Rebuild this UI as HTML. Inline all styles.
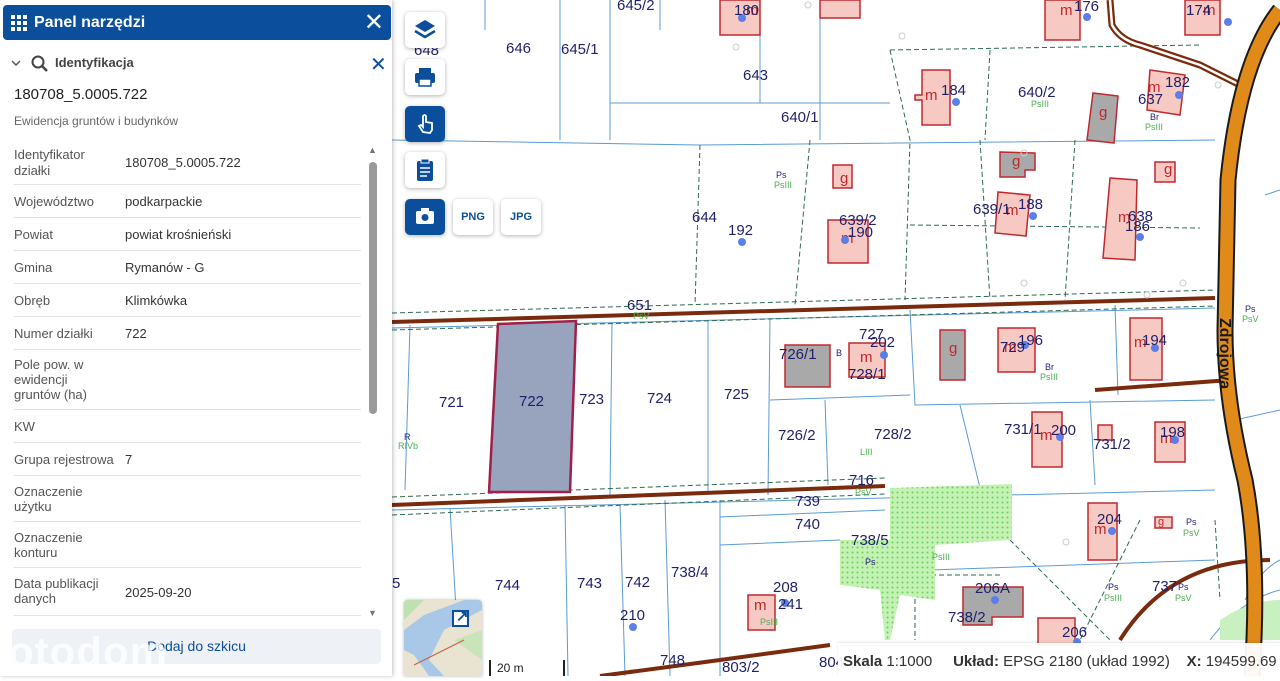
<!DOCTYPE html>
<html><head><meta charset="utf-8"><style>
*{margin:0;padding:0;box-sizing:border-box}
body{width:1280px;height:676px;overflow:hidden;background:#fff;font-family:"Liberation Sans",sans-serif;position:relative}
#map{position:absolute;left:0;top:0}
.panel{position:absolute;left:0;top:0;width:392px;height:676px;background:#fff;box-shadow:1px 0 4px rgba(0,0,0,.25)}
.hdr{position:absolute;left:3px;top:5px;width:388px;height:35px;background:#0b4f9c;border-radius:4px;color:#fff;font-weight:bold;font-size:16px;line-height:35px;padding-left:31px}
.row{position:absolute;left:14px;width:347px;border-bottom:1px solid #e3e3e3;font-size:13px;color:#555}
.row .v{position:absolute;left:111px;color:#333}
.btn{position:absolute;width:40px;height:36px;background:#fff;border-radius:5px;box-shadow:0 1px 4px rgba(0,0,0,.3)}
.btn.b{background:#0b4f9c}
.tb{position:absolute;font-size:11px;font-weight:bold;color:#0b4f9c;text-align:center;line-height:36px}
svg text{font-family:"Liberation Sans",sans-serif}
</style></head><body>
<svg id="map" width="1280" height="676" viewBox="0 0 1280 676">
<defs><pattern id="dots" width="5" height="5" patternUnits="userSpaceOnUse"><rect width="5" height="5" fill="#c4f2b4"/><circle cx="2.5" cy="2.5" r="1" fill="#6fcf5a"/></pattern></defs>
<g stroke="#5b9bd5" stroke-width="1" fill="none">
<path d="M392 140 L700 145 L1215 140"/><path d="M610 0 L610 140"/><path d="M660 0 L660 30"/><path d="M560 0 L560 140"/><path d="M485 0 L485 30"/>
<path d="M610 103 L890 103"/><path d="M760 0 L760 103"/><path d="M820 0 L820 140"/>
<path d="M392 328 L1215 308"/><path d="M392 510 L1215 490"/>
<path d="M410 325 L405 490"/><path d="M612 323 L610 495"/><path d="M708 320 L708 495"/><path d="M770 318 L768 495"/>
<path d="M770 400 L910 395"/><path d="M825 400 L828 485"/><path d="M910 310 L915 405 L1215 400"/><path d="M960 405 L980 488"/>
<path d="M1090 400 L1095 485"/><path d="M1115 305 L1118 395"/><path d="M1235 420 L1280 410"/><path d="M1265 195 L1280 190"/>
<path d="M450 508 L460 676"/><path d="M565 505 L568 676"/><path d="M620 505 L625 676"/><path d="M665 500 L670 676"/>
<path d="M720 500 L720 676"/><path d="M720 517 L885 510"/><path d="M720 545 L840 540"/>
<path d="M1010 485 L1010 540"/><path d="M930 570 L1215 560"/>
<path d="M1245 600 Q1260 570 1280 560"/><path d="M1210 640 Q1240 600 1280 590"/>
</g>
<g stroke="#2e6b4f" stroke-width="1" fill="none" stroke-dasharray="5,3">
<path d="M700 145 L695 305"/><path d="M810 140 L795 305"/><path d="M890 50 L910 140 L905 300"/><path d="M990 50 L985 140"/>
<path d="M1075 140 L1065 300"/><path d="M890 50 L1200 45"/>
<path d="M980 140 L990 300"/><path d="M910 225 L1200 228"/>
<path d="M392 313 L1215 290"/><path d="M392 330 L1215 306"/><path d="M392 497 L885 478"/><path d="M392 515 L885 494"/>
<path d="M1140 520 L1080 640"/><path d="M1215 520 L1220 600"/>
<path d="M915 575 L915 640"/><path d="M915 575 L1000 575"/><path d="M1010 540 L1110 640"/>
</g>
<path d="M840 540 L890 540 L890 488 L1012 484 L1012 540 L935 545 L935 600 L900 595 L890 640 L885 640 L880 590 L840 585 Z" fill="url(#dots)"/>
<path d="M1220 620 Q1250 600 1280 600 L1280 640 L1220 640 Z" fill="#c8f0c0"/>
<g stroke="#7a2b0e" stroke-width="4" fill="none">
<path d="M392 322 L1215 298"/><path d="M392 505 L885 486"/>
<path d="M1095 390 L1230 380"/>
<path d="M1120 640 Q1170 560 1270 560"/>
<path d="M600 676 L720 660 L830 645"/>
</g>
<path d="M1110 0 L1112 25 Q1120 40 1140 45 L1200 65 L1240 85" stroke="#7a2b0e" stroke-width="7" fill="none"/>
<path d="M1110 0 L1112 25 Q1120 40 1140 45 L1200 65 L1240 85" stroke="#fff" stroke-width="2.5" fill="none"/>
<path d="M1280 10 Q1240 60 1228 180 L1225 330 Q1225 400 1245 480 Q1260 560 1252 676" stroke="#1a1a1a" stroke-width="17" fill="none"/>
<path d="M1280 10 Q1240 60 1228 180 L1225 330 Q1225 400 1245 480 Q1260 560 1252 676" stroke="#e08a1a" stroke-width="13" fill="none"/>
<path d="M498 324 L576 321 L570 492 L489 492 Z" fill="#98a4bd" stroke="#a0204a" stroke-width="2.5"/>
<g fill="#f6cac2" stroke="#c0282e" stroke-width="1.5">
<path d="M720 0 L760 0 L760 35 L720 35Z"/><path d="M820 0 L860 0 L860 18 L820 18Z"/>
<path d="M1045 0 L1080 0 L1080 40 L1045 40Z"/><path d="M1185 0 L1220 0 L1220 35 L1185 35Z"/>
<path d="M922 70 L950 70 L950 125 L922 125 L922 100 L915 100 L915 95 L922 95Z"/>
<path d="M1150 70 L1185 75 L1180 115 L1147 110Z"/>
<path d="M833 165 L852 165 L852 188 L833 188Z"/><path d="M828 220 L868 220 L868 263 L828 263Z"/>
<path d="M998 192 L1030 195 L1026 236 L995 233Z"/><path d="M1110 178 L1137 180 L1135 260 L1103 258Z"/>
<path d="M1155 162 L1175 162 L1175 182 L1155 182Z"/>
<path d="M998 328 L1035 328 L1035 372 L998 372Z"/><path d="M1130 318 L1162 318 L1162 380 L1130 380Z"/>
<path d="M1032 412 L1062 412 L1062 467 L1032 467Z"/><path d="M1155 422 L1185 422 L1185 462 L1155 462Z"/>
<path d="M1098 425 L1112 425 L1112 440 L1098 440Z"/>
<path d="M1088 503 L1117 503 L1117 560 L1088 560Z"/><path d="M1155 517 L1172 517 L1172 528 L1155 528Z"/>
<path d="M748 595 L775 595 L775 630 L748 630Z"/><path d="M1038 618 L1075 618 L1075 645 L1038 645Z"/>
<path d="M849 343 L885 343 L885 377 L849 377Z"/>
</g>
<g fill="#a9a9a9" stroke="#c0282e" stroke-width="1.5">
<path d="M1093 93 L1118 96 L1114 143 L1087 140Z"/><path d="M1000 152 L1035 153 L1035 170 L1025 170 L1025 177 L1000 177Z"/>
<path d="M785 345 L830 345 L830 387 L785 387Z"/><path d="M940 330 L965 330 L965 380 L940 380Z"/>
<path d="M963 587 L1023 587 L1023 617 L992 617 L992 625 L963 625Z"/>
</g>
<g font-size="15" fill="#c0282e">
<text x="925" y="100">m</text><text x="1148" y="92">m</text><text x="1099" y="117">g</text><text x="1012" y="166">g</text><text x="1164" y="174">g</text>
<text x="1118" y="222">m</text><text x="1006" y="215">m</text><text x="840" y="183">g</text><text x="841" y="243">m</text>
<text x="746" y="15">m</text><text x="1060" y="15">m</text><text x="1203" y="15">m</text><text x="949" y="353">g</text>
<text x="1004" y="352">m</text><text x="1134" y="347">m</text><text x="1040" y="440">m</text><text x="1160" y="443">m</text>
<text x="1094" y="534">m</text><text x="754" y="610">m</text><text x="1158" y="525" font-size="11">g</text><text x="860" y="362">m</text>
</g>
<g fill="#5b7fe8">
<circle cx="742" cy="242" r="4"/><circle cx="845" cy="240" r="4"/><circle cx="1033" cy="216" r="4"/><circle cx="1140" cy="237" r="4"/>
<circle cx="884" cy="355" r="4"/><circle cx="1025" cy="345" r="4"/><circle cx="1155" cy="348" r="4"/><circle cx="1060" cy="437" r="4"/>
<circle cx="1175" cy="440" r="4"/><circle cx="1112" cy="531" r="4"/><circle cx="995" cy="600" r="4"/><circle cx="633" cy="627" r="4"/>
<circle cx="785" cy="603" r="4"/><circle cx="1077" cy="642" r="4"/><circle cx="956" cy="102" r="4"/><circle cx="1179" cy="95" r="4"/>
<circle cx="1087" cy="17" r="4"/><circle cx="742" cy="18" r="4"/><circle cx="1228" cy="22" r="4"/>
</g>
<g fill="none" stroke="#ccc"><circle cx="902" cy="36" r="3"/><circle cx="1218" cy="85" r="3"/><circle cx="1024" cy="153" r="3"/><circle cx="1024" cy="283" r="3"/><circle cx="1183" cy="283" r="3"/><circle cx="736" cy="47" r="3"/><circle cx="808" cy="5" r="3"/><circle cx="1147" cy="295" r="3"/><circle cx="1066" cy="542" r="3"/></g>
<g font-size="15" fill="#1f1f6a">
<text x="414" y="55">648</text><text x="506" y="53">646</text><text x="561" y="54">645/1</text><text x="617" y="10">645/2</text>
<text x="743" y="80">643</text><text x="781" y="122">640/1</text><text x="1018" y="97">640/2</text><text x="1138" y="104">637</text>
<text x="692" y="222">644</text><text x="728" y="235">192</text><text x="839" y="225">639/2</text><text x="848" y="237">190</text>
<text x="973" y="214">639/1</text><text x="1018" y="209">188</text><text x="1128" y="221">638</text><text x="1125" y="231">186</text>
<text x="627" y="310">651</text><text x="859" y="339">727</text><text x="870" y="347">202</text><text x="779" y="359">726/1</text>
<text x="848" y="379">728/1</text><text x="1000" y="352">729</text><text x="1018" y="345">196</text><text x="1142" y="345">194</text>
<text x="439" y="407">721</text><text x="519" y="406">722</text><text x="579" y="404">723</text><text x="647" y="403">724</text>
<text x="724" y="399">725</text><text x="778" y="440">726/2</text><text x="874" y="439">728/2</text><text x="1004" y="434">731/1</text>
<text x="1051" y="435">200</text><text x="1093" y="449">731/2</text><text x="1160" y="437">198</text><text x="849" y="485">716</text>
<text x="795" y="506">739</text><text x="795" y="529">740</text><text x="851" y="545">738/5</text><text x="495" y="590">744</text>
<text x="577" y="588">743</text><text x="625" y="587">742</text><text x="671" y="577">738/4</text><text x="620" y="620">210</text>
<text x="773" y="592">208</text><text x="778" y="609">241</text><text x="948" y="622">738/2</text><text x="975" y="593">206A</text>
<text x="1097" y="524">204</text><text x="1152" y="591">737</text><text x="660" y="665">748</text><text x="722" y="672">803/2</text>
<text x="1062" y="637">206</text><text x="734" y="15">180</text><text x="1074" y="11">176</text><text x="1186" y="15">174</text>
<text x="941" y="95">184</text><text x="1165" y="87">182</text><text x="392" y="588">5</text><text x="819" y="667">804</text>
</g>
<g font-size="9" fill="#1f1f7a"><text x="776" y="178">Ps</text><text x="865" y="565">Ps</text><text x="1108" y="590">Ps</text><text x="1186" y="525">Ps</text><text x="1178" y="590">Ps</text><text x="1245" y="312">Ps</text><text x="404" y="440">R</text><text x="1150" y="120">Br</text><text x="1045" y="370">Br</text><text x="836" y="356">B</text></g>
<g font-size="9" fill="#4caf50"><text x="774" y="188">PsIII</text><text x="932" y="560">PsIII</text><text x="1104" y="601">PsIII</text><text x="1183" y="536">PsV</text><text x="1175" y="601">PsV</text><text x="1040" y="380">PsIII</text><text x="1145" y="130">PsIII</text><text x="1242" y="322">PsV</text><text x="398" y="449">RIVb</text><text x="855" y="495">PsV</text><text x="760" y="625">PsIII</text><text x="633" y="319">PsV</text><text x="860" y="455">LIII</text><text x="1031" y="107">PsIII</text></g>
<text x="1220" y="318" font-size="16" font-weight="bold" fill="#1a1a1a" transform="rotate(90 1220 318)">Zdrojowa</text>
</svg>

<div class="panel">
<div class="hdr"><svg style="position:absolute;left:8px;top:10px" width="16" height="16"><g fill="#fff"><rect x="0" y="0" width="4" height="4"/><rect x="6" y="0" width="4" height="4"/><rect x="12" y="0" width="4" height="4"/><rect x="0" y="6" width="4" height="4"/><rect x="6" y="6" width="4" height="4"/><rect x="12" y="6" width="4" height="4"/><rect x="0" y="12" width="4" height="4"/><rect x="6" y="12" width="4" height="4"/><rect x="12" y="12" width="4" height="4"/></g></svg>Panel narzędzi<span style="position:absolute;right:7px;top:0;font-weight:normal;font-size:24px">✕</span></div>
<svg style="position:absolute;left:10px;top:55px" width="40" height="20"><path d="M2 6 L6 10 L10 6" stroke="#555" stroke-width="1.5" fill="none"/><circle cx="28" cy="7" r="5.5" stroke="#444" stroke-width="2" fill="none"/><path d="M32 11 L37 16" stroke="#444" stroke-width="2.5"/></svg>
<div style="position:absolute;left:55px;top:55px;font-size:13px;font-weight:bold;color:#444">Identyfikacja</div>
<div style="position:absolute;left:370px;top:52px;font-size:20px;color:#0b4f9c">✕</div>
<div style="position:absolute;left:14px;top:86px;font-size:15px;color:#222">180708_5.0005.722</div>
<div style="position:absolute;left:14px;top:114px;font-size:12px;color:#666">Ewidencja gruntów i budynków</div>
<div class="row" style="top:145px;height:40px;line-height:16px;padding-top:2px">Identyfikator<br>działki<span class="v" style="top:10px">180708_5.0005.722</span></div>
<div class="row" style="top:185px;height:33px;line-height:33px">Województwo<span class="v">podkarpackie</span></div>
<div class="row" style="top:218px;height:33px;line-height:33px">Powiat<span class="v">powiat krośnieński</span></div>
<div class="row" style="top:251px;height:33px;line-height:33px">Gmina<span class="v">Rymanów - G</span></div>
<div class="row" style="top:284px;height:33px;line-height:33px">Obręb<span class="v">Klimkówka</span></div>
<div class="row" style="top:317px;height:33px;line-height:33px">Numer działki<span class="v">722</span></div>
<div class="row" style="top:350px;height:60px;line-height:15px;padding-top:7px">Pole pow. w<br>ewidencji<br>gruntów (ha)</div>
<div class="row" style="top:410px;height:33px;line-height:33px">KW</div>
<div class="row" style="top:443px;height:33px;line-height:33px">Grupa rejestrowa<span class="v">7</span></div>
<div class="row" style="top:476px;height:46px;line-height:15px;padding-top:8px">Oznaczenie<br>użytku</div>
<div class="row" style="top:522px;height:46px;line-height:15px;padding-top:8px">Oznaczenie<br>konturu</div>
<div class="row" style="top:568px;height:48px;line-height:15px;padding-top:8px">Data publikacji<br>danych<span class="v" style="top:17px">2025-09-20</span></div>
<div style="position:absolute;left:368px;top:145px;font-size:9px;color:#777">▲</div>
<div style="position:absolute;left:369px;top:162px;width:8px;height:252px;background:#9a9a9a;border-radius:4px"></div>
<div style="position:absolute;left:368px;top:608px;font-size:9px;color:#777">▼</div>
<div style="position:absolute;left:12px;top:629px;width:369px;height:35px;background:#eef1f5;border-radius:4px;text-align:center;line-height:35px;font-size:14px;color:#0b4f9c">Dodaj do szkicu</div>
<div style="position:absolute;left:8px;top:628px;font-size:42px;font-weight:bold;color:rgba(255,255,255,.75);letter-spacing:1px">otodom</div>
</div>

<div class="btn" style="left:405px;top:12px"><svg width="40" height="36"><path d="M20 8 L30 14 L20 20 L10 14Z" fill="#0b4f9c"/><path d="M10 19 L20 25 L30 19" stroke="#0b4f9c" stroke-width="2.5" fill="none"/></svg></div>
<div class="btn" style="left:405px;top:59px"><svg width="40" height="36"><rect x="14" y="9" width="12" height="5" fill="#0b4f9c"/><rect x="10" y="14" width="20" height="10" rx="2" fill="#0b4f9c"/><rect x="14" y="20" width="12" height="7" fill="#fff" stroke="#0b4f9c" stroke-width="1.5"/></svg></div>
<div class="btn b" style="left:405px;top:106px"><svg width="40" height="36"><path d="M18 26 L14 20 L16 19 L18 21 L18 10 Q20 8 21 10 L21 16 L27 17 L27 24 L25 27Z" fill="none" stroke="#fff" stroke-width="1.8"/></svg></div>
<div class="btn" style="left:405px;top:152px"><svg width="40" height="36"><rect x="12" y="9" width="16" height="20" rx="2" fill="#0b4f9c"/><rect x="16" y="7" width="8" height="4" fill="#0b4f9c" stroke="#fff"/><path d="M15 16h10M15 20h10M15 24h7" stroke="#fff" stroke-width="1.5"/></svg></div>
<div class="btn b" style="left:405px;top:199px"><svg width="40" height="36"><rect x="11" y="12" width="18" height="13" rx="2" fill="#fff"/><rect x="16" y="9" width="8" height="4" fill="#fff"/><circle cx="20" cy="18.5" r="3.5" fill="#0b4f9c"/></svg></div>
<div class="btn tb" style="left:453px;top:199px">PNG</div>
<div class="btn tb" style="left:501px;top:199px">JPG</div>

<div style="position:absolute;left:404px;top:600px;width:78px;height:76px;background:#e8e2d0;border-radius:4px 4px 0 0;overflow:hidden;box-shadow:0 0 3px rgba(0,0,0,.3)"><svg width="78" height="76"><rect width="78" height="76" fill="#e9e4d2"/><path d="M0 30 L20 15 L60 0 L78 0 L78 10 L40 30 L25 60 L40 76 L25 76 L10 55 L0 50Z" fill="#a9c8e8"/><path d="M0 0 L20 0 L0 20Z" fill="#bfe0b0"/><path d="M50 40 L78 30 L78 60Z" fill="#c9e4b8"/><path d="M10 65 L60 40" stroke="#c06040"/></svg><div style="position:absolute;left:48px;top:10px;width:17px;height:17px;border:2px solid #0b4f9c;background:#fff"></div><div style="position:absolute;left:52px;top:7px;font-size:15px;color:#0b4f9c;font-weight:bold">↗</div></div>
<div style="position:absolute;left:489px;top:660px;width:2px;height:16px;background:#222"></div>
<div style="position:absolute;left:563px;top:660px;width:2px;height:16px;background:#222"></div>
<div style="position:absolute;left:497px;top:661px;font-size:12px;color:#222">20 m</div>

<div style="position:absolute;left:838px;top:643px;width:442px;height:33px;background:rgba(255,255,255,.95);font-size:15px;color:#333;line-height:38px;padding-left:5px;white-space:nowrap;box-shadow:0 -1px 2px rgba(0,0,0,.1)"><b>Skala</b> 1:1000 &nbsp;&nbsp;&nbsp;&nbsp;<b>Układ:</b> EPSG 2180 (układ 1992) &nbsp;&nbsp;&nbsp;<b>X:</b> 194599.69 m</div>
</body></html>
